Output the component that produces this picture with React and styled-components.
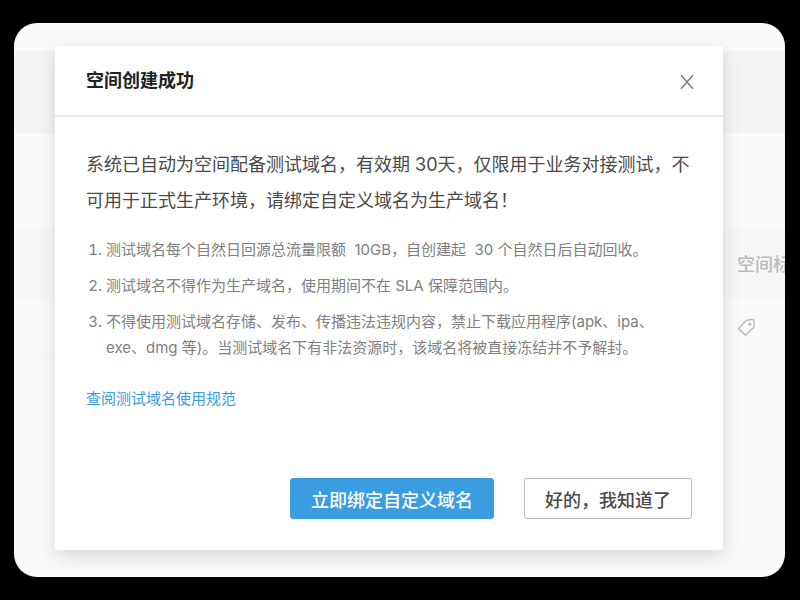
import React from 'react';
import styled, { createGlobalStyle } from 'styled-components';

const GlobalStyle = createGlobalStyle`
  *, *::before, *::after { box-sizing: border-box; }
  body {
    margin: 0;
    background: #000;
    font-family: Inter, "Noto Sans CJK SC", sans-serif;
    color: #4a4a4a;
  }
`;

const Page = styled.div`
  min-height: 100vh;
  display: grid;
  padding: 23px 15px 23px 14px;
`;

const Screen = styled.div`
  display: grid;
  grid-template: 1fr / 1fr;
  overflow: hidden;
  border-radius: 23px;
  background: #fafafa;
`;

const Backdrop = styled.div`
  grid-area: 1 / 1;
  padding-top: 28px;
  color: #bbb;
`;

const Banner = styled.div`
  height: 82px;
  margin-bottom: 95px;
  background: #f4f4f4;
`;

const TableRow = styled.div`
  display: flex;
  justify-content: flex-end;
  align-items: center;
  height: ${(p) => (p.$head ? '70px' : '61px')};
  background: ${(p) => (p.$head ? '#f7f7f7' : '#fafafa')};
  border-bottom: ${(p) => (p.$head ? '0' : '1px solid #f4f4f4')};
  font-size: 18px;
  font-weight: 500;
`;

const LastCell = styled.div`
  width: 48px;
  display: flex;
  overflow: hidden;
  white-space: nowrap;
`;

const Dialog = styled.section`
  grid-area: 1 / 1;
  z-index: 1;
  display: flex;
  flex-direction: column;
  margin: 23px 62px 27px 41px;
  background: #fff;
  border-radius: 2px;
  box-shadow: 0 6px 18px rgba(0, 0, 0, 0.14);
`;

const Header = styled.header`
  display: flex;
  align-items: center;
  justify-content: space-between;
  height: 71px;
  padding: 0 28px 0 31px;
  border-bottom: 2px solid #ebebeb;
`;

const Title = styled.h1`
  margin: 0;
  font-size: 18px;
  line-height: 26px;
  font-weight: 700;
  color: #222;
`;

const CloseButton = styled.button`
  display: flex;
  padding: 2px 0 0;
  border: 0;
  background: none;
  color: #777;
  cursor: pointer;
`;

const Content = styled.div`
  flex: 1;
  padding: 30px 31px 0;
`;

const Lead = styled.p`
  margin: 0 0 18px;
  font-size: 18px;
  line-height: 36px;
`;

const Rules = styled.ol`
  display: flex;
  flex-direction: column;
  gap: 10px;
  margin: 0 0 25px;
  padding: 0 24px 0 20px;
  font-size: 15px;
  line-height: 26px;
  color: #808080;
`;

const Rule = styled.li`
  white-space: pre-wrap;
`;

const DocLink = styled.a`
  font-size: 15px;
  line-height: 26px;
  color: #389cdd;
  text-decoration: none;
`;

const Footer = styled.footer`
  display: flex;
  justify-content: flex-end;
  gap: 30px;
  padding: 0 31px 31px;
`;

const Button = styled.button`
  height: 41px;
  padding: 0 20px;
  border: 1px solid ${(p) => (p.$primary ? '#399ddf' : '#bbb')};
  border-radius: 3px;
  background: ${(p) => (p.$primary ? '#399ddf' : '#fff')};
  color: ${(p) => (p.$primary ? '#fff' : '#4a4a4a')};
  font-family: inherit;
  font-size: 18px;
  font-weight: 500;
  cursor: pointer;
`;

const TagIcon = () => (
  <svg width="20" height="20" viewBox="0 0 20 20" fill="none" stroke="currentColor" strokeWidth="1.5" strokeLinejoin="round">
    <path d="M1.6 10.6 8.2 3.4Q9 2.5 10.2 2.3L15 1.6Q16.8 1.5 17 3.2L17.3 7.6Q17.3 8.9 16.4 9.8L8.4 17.2Z" />
    <circle cx="12.9" cy="6.1" r="0.9" />
  </svg>
);

const CloseIcon = () => (
  <svg width="16" height="16" viewBox="0 0 16 16" fill="none" stroke="currentColor" strokeWidth="1.4">
    <path d="M2 1.2 14 14.8M14 1.2 2 14.8" />
  </svg>
);

const rules = [
  '测试域名每个自然日回源总流量限额  10GB，自创建起  30 个自然日后自动回收。',
  '测试域名不得作为生产域名，使用期间不在 SLA 保障范围内。',
  '不得使用测试域名存储、发布、传播违法违规内容，禁止下载应用程序(apk、ipa、exe、dmg 等)。当测试域名下有非法资源时，该域名将被直接冻结并不予解封。',
];

export default function App() {
  return (
    <Page>
      <GlobalStyle />
      <Screen>
        <Backdrop>
          <Banner />
          <TableRow $head>
            <LastCell>空间标</LastCell>
          </TableRow>
          <TableRow>
            <LastCell>
              <TagIcon />
            </LastCell>
          </TableRow>
        </Backdrop>
        <Dialog role="dialog" aria-labelledby="dialog-title">
          <Header>
            <Title id="dialog-title">空间创建成功</Title>
            <CloseButton type="button" aria-label="关闭">
              <CloseIcon />
            </CloseButton>
          </Header>
          <Content>
            <Lead>
              系统已自动为空间配备测试域名，有效期 30天，仅限用于业务对接测试，不可用于正式生产环境，请绑定自定义域名为生产域名！
            </Lead>
            <Rules>
              {rules.map((text) => (
                <Rule key={text}>{text}</Rule>
              ))}
            </Rules>
            <DocLink href="#rules">查阅测试域名使用规范</DocLink>
          </Content>
          <Footer>
            <Button type="button" $primary>立即绑定自定义域名</Button>
            <Button type="button">好的，我知道了</Button>
          </Footer>
        </Dialog>
      </Screen>
    </Page>
  );
}
